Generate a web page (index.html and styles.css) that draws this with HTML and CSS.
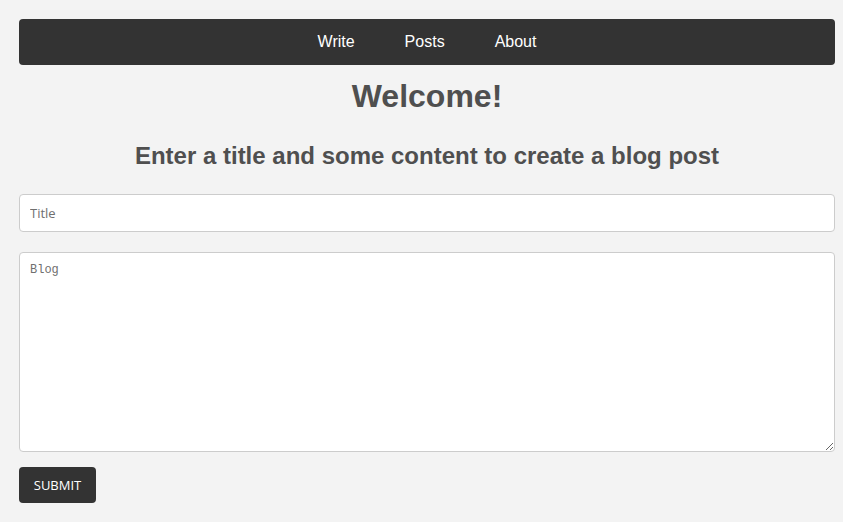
FILE: index.html
```html
<!DOCTYPE html>
<html>
<head>
<meta charset="utf-8">
<link rel="stylesheet" href="styles.css">
</head>
<body>
<div class="page">
  <nav class="nav">
    <a class="nav-link" href="#">Write</a>
    <a class="nav-link" href="#">Posts</a>
    <a class="nav-link" href="#">About</a>
  </nav>
  <h1 class="title">Welcome!</h1>
  <h2 class="subtitle">Enter a title and some content to create a blog post</h2>
  <form class="form">
    <input class="field" type="text" placeholder="Title">
    <textarea class="area" placeholder="Blog"></textarea>
    <button class="submit" type="button">SUBMIT</button>
  </form>
</div>
</body>
</html>
```
FILE: styles.css
```css
html, body {
  margin: 0;
  padding: 0;
  background: #f3f3f3;
}
.page {
  padding: 19px 8px 0 19px;
  font-family: "Liberation Sans", Arial, sans-serif;
}
.nav {
  background: #333333;
  border-radius: 4px;
  height: 46px;
  display: flex;
  justify-content: center;
  align-items: center;
}
.nav-link {
  color: #ffffff;
  text-decoration: none;
  font-size: 16px;
  padding: 0 25px;
}
.title {
  margin: 13px 0 0;
  text-align: center;
  font-size: 32px;
  line-height: 37px;
  color: #4f4f4f;
}
.subtitle {
  margin: 27px 0 0;
  text-align: center;
  font-size: 24px;
  line-height: 28px;
  color: #4f4f4f;
}
.form {
  display: flex;
  flex-direction: column;
  margin-top: 24px;
}
.field, .area {
  box-sizing: border-box;
  width: 100%;
  background: #fff;
  border: 1px solid #cccccc;
  border-radius: 4px;
  padding: 0 10px;
  color: #333;
  outline: none;
}
.field {
  height: 38px;
  font-family: "Open Sans", sans-serif;
  font-size: 13px;
}
.area {
  margin-top: 20px;
  height: 200px;
  padding-top: 10px;
  font-family: "Liberation Mono", monospace;
  font-size: 12px;
  resize: both;
}
.field::placeholder, .area::placeholder {
  color: #6f6f6f;
}
.submit {
  align-self: flex-start;
  margin-top: 15px;
  width: 77px;
  height: 36px;
  background: #333333;
  color: #fff;
  border: none;
  border-radius: 4px;
  font-family: "Open Sans", sans-serif;
  font-size: 13px;
  padding: 0;
}
```
